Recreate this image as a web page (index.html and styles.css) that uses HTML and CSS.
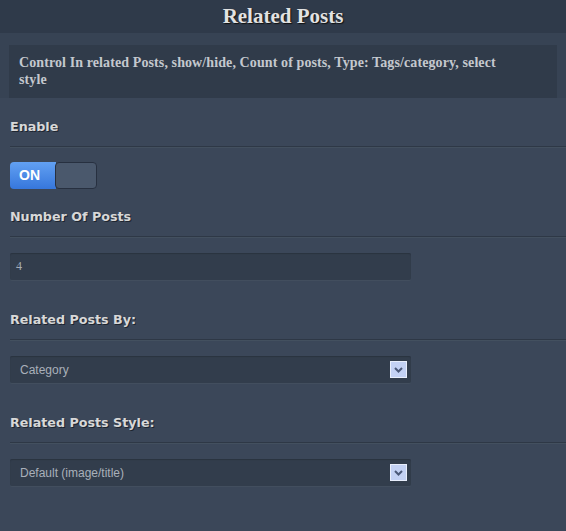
FILE: index.html
```html
<!DOCTYPE html>
<html>
<head>
<meta charset="utf-8">
<link rel="stylesheet" href="styles.css">
</head>
<body>
<div class="panel">
  <div class="header"><h1 class="title">Related Posts</h1></div>
  <div class="desc-wrap">
    <div class="desc">Control In related Posts, show/hide, Count of posts, Type: Tags/category, select style</div>
  </div>
  <div class="content">
    <div class="field field-first">
      <div class="label">Enable</div>
      <div class="control control-toggle">
        <div class="toggle">
          <span class="toggle-on">ON</span>
          <span class="toggle-off"></span>
        </div>
      </div>
    </div>
    <div class="field field-toggle-next">
      <div class="label">Number Of Posts</div>
      <div class="control">
        <div class="input">4</div>
      </div>
    </div>
    <div class="field field-spaced">
      <div class="label">Related Posts By:</div>
      <div class="control">
        <div class="select">
          <span class="select-text">Category</span>
          <span class="select-arrow"><svg width="9" height="6" viewBox="0 0 9 6"><path d="M1 1 L4.5 4.5 L8 1" fill="none" stroke="#4a5878" stroke-width="2"/></svg></span>
        </div>
      </div>
    </div>
    <div class="field field-spaced">
      <div class="label">Related Posts Style:</div>
      <div class="control">
        <div class="select">
          <span class="select-text">Default (image/title)</span>
          <span class="select-arrow"><svg width="9" height="6" viewBox="0 0 9 6"><path d="M1 1 L4.5 4.5 L8 1" fill="none" stroke="#4a5878" stroke-width="2"/></svg></span>
        </div>
      </div>
    </div>
  </div>
</div>
</body>
</html>
```

FILE: styles.css
```css
html, body {
  margin: 0;
  padding: 0;
  background: #3b4759;
}
.panel {
  width: 566px;
  min-height: 531px;
  background: #3b4759;
}
.header {
  height: 33px;
  background: #2f3a4a;
  display: flex;
  align-items: center;
  justify-content: center;
}
.title {
  margin: 0;
  font-family: "Liberation Serif", serif;
  font-weight: bold;
  font-size: 21px;
  color: #e2e2e2;
  text-shadow: 1px 1px 1px #111;
  line-height: 33px;
}
.desc-wrap {
  background: #374354;
  padding: 12px 9px 0 9px;
}
.desc {
  background: #303b4a;
  padding: 9px 40px 10px 10px;
  font-family: "Liberation Serif", serif;
  font-weight: bold;
  font-size: 14px;
  letter-spacing: 0.1px;
  line-height: 17px;
  color: #c4c8ce;
}
.content {
  padding-left: 10px;
}
.field-first {
  padding-top: 20px;
}
.field-toggle-next {
  padding-top: 19px;
}
.field-spaced {
  padding-top: 31px;
}
.label {
  font-family: "DejaVu Sans", sans-serif;
  font-weight: bold;
  font-size: 12.7px;
  line-height: 18px;
  color: #d8d8d8;
  text-shadow: 1px 1px 0 #1e2530;
  padding-bottom: 10px;
  border-bottom: 1px solid #2e3846;
  box-shadow: 0 1px 0 #43505f;
}
.control {
  padding-top: 16px;
}
.control-toggle {
  padding-top: 15px;
}
.toggle {
  display: flex;
  width: 88px;
  height: 27px;
}
.toggle-on {
  width: 46px;
  height: 27px;
  box-sizing: border-box;
  background: linear-gradient(#62a0f2, #3677dc);
  border-radius: 4px 0 0 4px;
  color: #fff;
  font-family: "Liberation Sans", sans-serif;
  font-weight: bold;
  font-size: 14px;
  line-height: 27px;
  padding-left: 9px;
}
.toggle-off {
  width: 42px;
  height: 27px;
  box-sizing: border-box;
  background: #4a586c;
  border: 1px solid #273040;
  border-radius: 4px;
  margin-left: -1px;
}
.input {
  width: 401px;
  height: 27px;
  box-sizing: border-box;
  background: #323d4c;
  border-radius: 2px;
  box-shadow: inset 0 1px 1px #2a3340, 0 1px 0 #424e5e;
  font-family: "Liberation Serif", serif;
  font-size: 12px;
  color: #a6adb7;
  line-height: 27px;
  padding-left: 6px;
}
.select {
  width: 401px;
  height: 27px;
  box-sizing: border-box;
  background: #323d4c;
  border-radius: 2px;
  box-shadow: inset 0 1px 1px #2a3340, 0 1px 0 #424e5e;
  display: flex;
  align-items: center;
  justify-content: space-between;
  padding: 0 4px 0 10px;
}
.select-text {
  font-family: "Liberation Sans", sans-serif;
  font-size: 12px;
  color: #a9b0ba;
}
.select-arrow {
  width: 17px;
  height: 17px;
  box-sizing: border-box;
  background: #c3d1f4;
  border: 1px solid #e8eefc;
  display: flex;
  align-items: center;
  justify-content: center;
}
```
